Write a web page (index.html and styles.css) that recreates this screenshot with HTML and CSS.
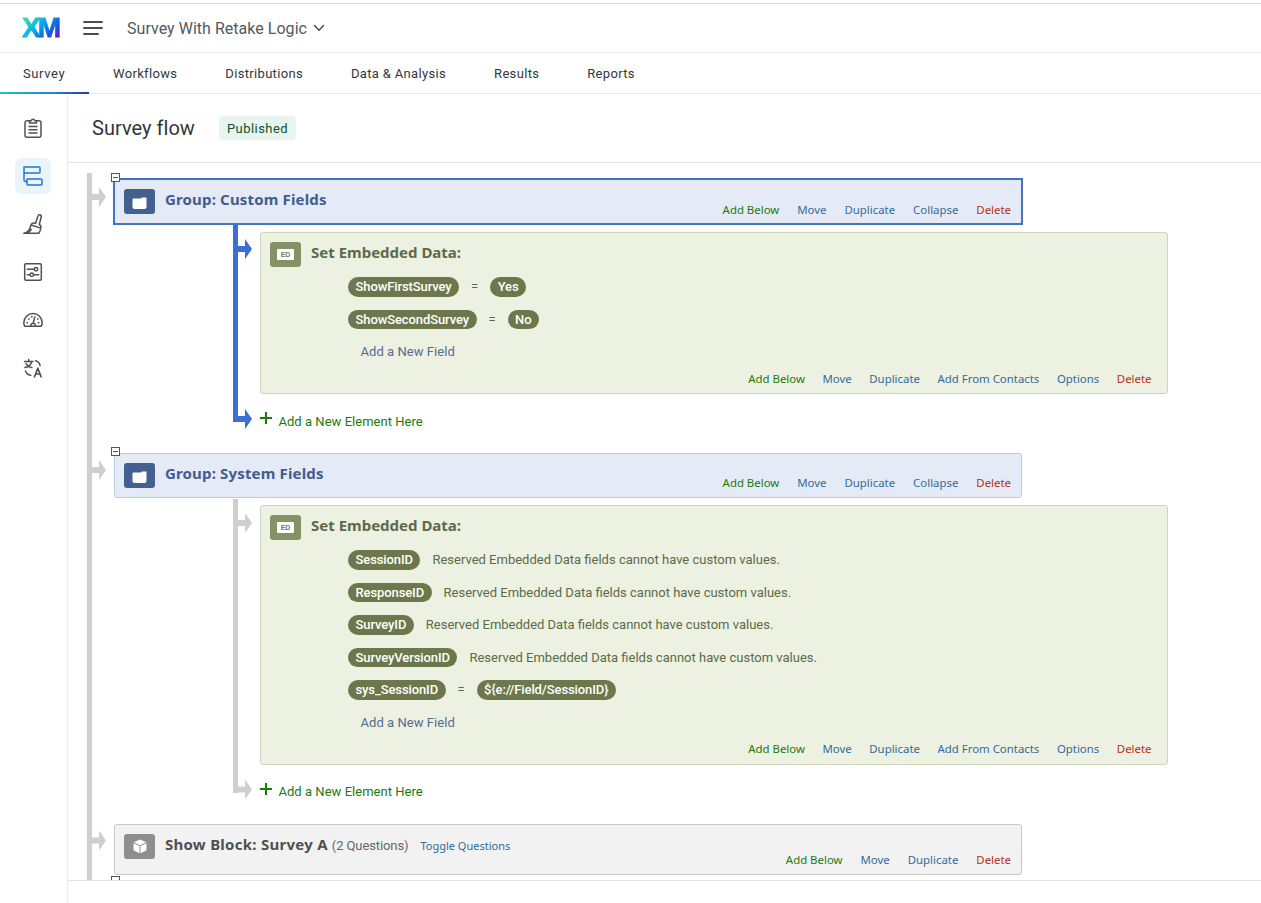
FILE: index.html
```html
<!DOCTYPE html>
<html lang="en">
<head>
<meta charset="UTF-8" />
<meta name="viewport" content="width=device-width, initial-scale=1" />
<title>Survey flow</title>
<link rel="stylesheet" href="styles.css">
</head>
<body>
<header class="topbar">
  <span class="logo">XM</span>
  <svg class="menu" width="20" height="14" viewBox="0 0 20 14" fill="none" stroke="#4a4d50" stroke-width="2" stroke-linecap="round"><path d="M1 1h18M1 7h18M1 13h14"/></svg>
  <span class="project">Survey With Retake Logic</span>
  <svg width="12" height="8" viewBox="0 0 12 8" fill="none" stroke="#4a4d50" stroke-width="1.5" stroke-linecap="round" stroke-linejoin="round"><path d="M1.500 1.500l4.500 4.700 4.500-4.700"/></svg>
</header>

<nav class="tabs">
  <a class="tab active">Survey</a>
  <a class="tab">Workflows</a>
  <a class="tab">Distributions</a>
  <a class="tab">Data &amp; Analysis</a>
  <a class="tab">Results</a>
  <a class="tab">Reports</a>
</nav>

<div class="main">
  <aside class="sidebar">
    <a class="side-item"><svg viewBox="0 0 20 20"><path d="M6.500 2.700H4a2 2 0 0 0-2 2v12.500a2 2 0 0 0 2 2h12a2 2 0 0 0 2-2V4.700a2 2 0 0 0-2-2h-2.500M6.500 5V2.700h1.600a2 2 0 0 1 3.800 0h1.600V5zM6 8.500h8M6 11.800h8M6 15.100h8"/></svg></a>
    <a class="side-item active"><svg viewBox="0 0 20 20"><path d="M1 1h15a1 1 0 0 1 1 1v4a1 1 0 0 1-1 1H1zM1 7v7a1.500 1.500 0 0 0 1.500 1.500H4M4 13h14a1 1 0 0 1 1 1v4a1 1 0 0 1-1 1H5a1 1 0 0 1-1-1z"/></svg></a>
    <a class="side-item"><svg viewBox="0 0 20 20"><path d="M.800 19.200c4-.300 6.200-3.400 7.200-8.200l9.800 3.100c-.3 2-.9 3.600-2 5.100zM8 11c.5-1.500 1.500-2.300 3-2l1.500.4L15 2a1.700 1.700 0 0 1 3.300.8L16.300 10.500c1.700.7 2 1.800 1.500 3.600M5 19l3.300-3.400"/></svg></a>
    <a class="side-item"><svg viewBox="0 0 20 20"><rect x="1.700" y="1.700" width="16.600" height="16.600" rx="1.200"/><path d="M4.300 7.200h6.800M4.300 12.800h2.500M10.800 12.800h5"/><circle cx="13" cy="7.200" r="1.700"/><circle cx="8.800" cy="12.800" r="1.700"/></svg></a>
    <a class="side-item"><svg viewBox="0 0 20 20"><path d="M1.800 16.300C.8 15 .8 13.900.8 12.800a9.200 9.200 0 0 1 18.400 0c0 1.100 0 2.200-1 3.500zM11.800 7l-1.600 6M8 16a2.200 2.200 0 1 1 4.200 0"/><path d="M4 12.800h.6M5.500 9h.6M8.500 6.700h.6M14.500 9h.6M15.300 12.800h.6"/></svg></a>
    <a class="side-item"><svg viewBox="0 0 20 20"><path d="M1.500 3.500h8.500M5.700 1.500v2M3 5.500c1 2.200 3 3.500 5.800 4M8.500 4C8 6.800 5.500 8.800 2 9.600M12.500 2.700c2.800.700 4.200 2.500 4.600 5M2.500 13c.8 2.400 2.400 3.800 5.200 4.300"/><path stroke-width="1.700" d="M11.500 18.800l3.300-8.600 3.300 8.600M12.700 16h4.300"/></svg></a>
  </aside>

  <main class="content">
    <div class="page-head">
      <h1>Survey flow</h1>
      <span class="badge">Published</span>
    </div>

    <div class="viewport">
      <div class="flow">

        <section class="node selected">
          <span class="toggle"></span>
          <div class="card group">
            <span class="icon"><svg width="15" height="12" viewBox="0 0 15 12"><path d="M.500 2.500a1 1 0 0 1 1-1H9L10 .500h4.500V10a2 2 0 0 1-2 2h-10a2 2 0 0 1-2-2z" fill="#fff"/></svg></span>
            <h2>Group: Custom Fields</h2>
            <div class="actions">
              <a class="add">Add Below</a><a>Move</a><a>Duplicate</a><a>Collapse</a><a class="delete">Delete</a>
            </div>
          </div>
          <div class="branch">
            <div class="node">
              <div class="card data">
                <div class="data-head"><span class="icon"><b>ED</b></span><h2>Set Embedded Data:</h2></div>
                <div class="fields">
                  <div class="field"><span class="pill">ShowFirstSurvey</span><span class="eq">=</span><span class="pill">Yes</span></div>
                  <div class="field"><span class="pill">ShowSecondSurvey</span><span class="eq">=</span><span class="pill">No</span></div>
                  <a class="new-field">Add a New Field</a>
                </div>
                <div class="actions">
                  <a class="add">Add Below</a><a>Move</a><a>Duplicate</a><a>Add From Contacts</a><a>Options</a><a class="delete">Delete</a>
                </div>
              </div>
            </div>
            <a class="new-element"><i class="plus"></i>Add a New Element Here</a>
          </div>
        </section>

        <section class="node">
          <span class="toggle"></span>
          <div class="card group">
            <span class="icon"><svg width="15" height="12" viewBox="0 0 15 12"><path d="M.500 2.500a1 1 0 0 1 1-1H9L10 .500h4.500V10a2 2 0 0 1-2 2h-10a2 2 0 0 1-2-2z" fill="#fff"/></svg></span>
            <h2>Group: System Fields</h2>
            <div class="actions">
              <a class="add">Add Below</a><a>Move</a><a>Duplicate</a><a>Collapse</a><a class="delete">Delete</a>
            </div>
          </div>
          <div class="branch">
            <div class="node">
              <div class="card data">
                <div class="data-head"><span class="icon"><b>ED</b></span><h2>Set Embedded Data:</h2></div>
                <div class="fields">
                  <div class="field"><span class="pill">SessionID</span><span class="note">Reserved Embedded Data fields cannot have custom values.</span></div>
                  <div class="field"><span class="pill">ResponseID</span><span class="note">Reserved Embedded Data fields cannot have custom values.</span></div>
                  <div class="field"><span class="pill">SurveyID</span><span class="note">Reserved Embedded Data fields cannot have custom values.</span></div>
                  <div class="field"><span class="pill">SurveyVersionID</span><span class="note">Reserved Embedded Data fields cannot have custom values.</span></div>
                  <div class="field"><span class="pill">sys_SessionID</span><span class="eq">=</span><span class="pill">${e://Field/SessionID}</span></div>
                  <a class="new-field">Add a New Field</a>
                </div>
                <div class="actions">
                  <a class="add">Add Below</a><a>Move</a><a>Duplicate</a><a>Add From Contacts</a><a>Options</a><a class="delete">Delete</a>
                </div>
              </div>
            </div>
            <a class="new-element"><i class="plus"></i>Add a New Element Here</a>
          </div>
        </section>

        <section class="node">
          <div class="card block">
            <span class="icon"><svg width="14" height="15" viewBox="0 0 14 15" fill="#fff"><path d="M7 .500l6.200 2.800L7 6.200.800 3.300zM.500 4.300l6 2.800v7.200l-6-3zM13.500 4.300l-6 2.800v7.200l6-3z"/></svg></span>
            <h2>Show Block: Survey A</h2>
            <span class="count">(2 Questions)</span>
            <a class="toggle-questions">Toggle Questions</a>
            <div class="actions">
              <a class="add">Add Below</a><a>Move</a><a>Duplicate</a><a class="delete">Delete</a>
            </div>
          </div>
        </section>

        <section class="node next">
          <span class="toggle"></span>
        </section>

      </div>
    </div>
  </main>
</div>
</body>
</html>
```
FILE: styles.css
```css
* {
  box-sizing: border-box;
}
body {
  margin: 0;
  height: 903px;
  overflow: hidden;
  display: flex;
  flex-direction: column;
  font-family: Roboto, "Noto Sans", sans-serif;
  font-size: 13px;
  color: #32363a;
  background: #fff;
}
h1, h2 {
  margin: 0;
}

/* header */
.topbar {
  height: 50px;
  margin-top: 3px;
  padding-left: 22px;
  border-top: 1px solid #dcdcdc;
  border-bottom: 1px solid #ebebeb;
  display: flex;
  align-items: center;
}
.logo {
  width: 38px;
  font: bold 28px/30px "Liberation Sans", sans-serif;
  letter-spacing: -3px;
  background: linear-gradient(135deg, #2fe0a0 15%, #0db8e8 38%, #0a6be0 65%, #5b1fd0 88%);
  -webkit-background-clip: text;
  background-clip: text;
  -webkit-text-stroke: 0.8px transparent;
  color: transparent;
}
.menu {
  margin: 0 24px 0 23px;
}
.project {
  font-size: 16px;
  letter-spacing: 0.03px;
  color: #55585c;
  margin-right: 6px;
}
.tabs {
  height: 41px;
  border-bottom: 1px solid #e8e8e8;
  display: flex;
}
.tab {
  padding: 0 24px;
  line-height: 41px;
  letter-spacing: 0.33px;
  height: 41px;
}
.tab.active {
  width: 89px;
  padding: 0 0 0 23px;
  letter-spacing: 0.6px;
  background: linear-gradient(90deg, #21c5c5, #1a86d8 60%, #2d32aa) bottom / 100% 2px no-repeat;
}

/* left icons */
.main {
  flex: 1;
  display: flex;
  min-height: 0;
}
.sidebar {
  width: 68px;
  padding: 16px 0 0 15px;
  border-right: 1px solid #ebebeb;
  display: flex;
  flex-direction: column;
  gap: 12px;
}
.side-item {
  width: 36px;
  height: 36px;
  border-radius: 6px;
  display: flex;
  align-items: center;
  justify-content: center;
}
.side-item svg {
  width: 20px;
  height: 20px;
  fill: none;
  stroke: #4f5254;
  stroke-width: 1.5;
  stroke-linecap: round;
  stroke-linejoin: round;
}
.side-item.active {
  background: #ebf3fb;
}
.side-item.active svg {
  stroke: #1f78d1;
}

.content {
  flex: 1;
}
.page-head {
  height: 69px;
  padding-left: 24px;
  border-bottom: 1px solid #e2e2e2;
  display: flex;
  align-items: center;
  gap: 24px;
}
.page-head h1 {
  font-size: 20px;
  font-weight: normal;
  letter-spacing: 0.03px;
}
.badge {
  height: 24px;
  padding: 0 8px;
  border-radius: 4px;
  background: #e8f5ef;
  color: #0f5132;
  line-height: 25px;
  letter-spacing: 0.45px;
}

/* flow */
.viewport {
  height: 718px;
  overflow: hidden;
  border-bottom: 1px solid #e2e2e2;
}
.flow {
  margin: 10px 0 0 19px;
  padding: 6px 0 60px 22px;
  border-left: 5px solid #cfcfcf;
}
.node {
  position: relative;
  width: 908px;
}
.node::before,
.new-element::before {
  content: "";
  position: absolute;
  left: -22px;
  top: 7px;
  width: 14px;
  height: 20px;
  background: #cfcfcf;
  clip-path: polygon(0 7px, 7px 7px, 7px 0, 14px 10px, 7px 20px, 7px 13px, 0 13px);
}
.node.selected::before,
.branch .node::before {
  top: 8px;
}
.node.next {
  height: 40px;
  margin-top: 7px;
}
.toggle {
  position: absolute;
  z-index: 1;
  left: -3px;
  top: -6px;
  width: 9px;
  height: 9px;
  border: 1px solid #55574a;
  background: linear-gradient(#55574a, #55574a) center / 5px 1px no-repeat #fff;
}
.card {
  border: 1px solid;
  border-radius: 3px;
}
.card h2 {
  font: bold 15px/20px "Noto Sans", sans-serif;
}
.group,
.block {
  height: 45px;
  padding: 0 10px 0 9px;
  display: flex;
}
.group {
  background: #e5ebf6;
  border-color: #b9cadd;
  color: #435c90;
}
.block {
  height: 51px;
  background: #f2f2f2;
  border-color: #c8c8c8;
  color: #505050;
}
.group h2,
.block h2 {
  margin: 9px 0 0 10px;
  letter-spacing: 0.16px;
}
.block h2 {
  letter-spacing: 0.26px;
}
.icon {
  width: 31px;
  height: 25px;
  border-radius: 3px;
  display: flex;
  align-items: center;
  justify-content: center;
}
.group .icon,
.block .icon {
  margin-top: 9px;
}
.group .icon {
  background: #43608f;
  padding-top: 3px;
}
.block .icon {
  background: #8e8e8e;
}
.selected > .card {
  margin-bottom: 1px;
  border-color: #4472c4;
  border-radius: 0;
  box-shadow: 0 0 0 1px #4472c4;
}
.actions {
  margin: auto 0 0 auto;
  display: flex;
  gap: 18px;
  padding-bottom: 7px;
  font: 11.4px/15px "Noto Sans", sans-serif;
  color: #346a9c;
}
.selected > .card .actions {
  padding-bottom: 6px;
}
.actions .add {
  color: #1a7a0c;
}
.actions .delete {
  color: #b5300f;
}

.branch {
  position: relative;
  margin-left: 119px;
  padding: 7px 0 0 27px;
}
.branch::before {
  content: "";
  position: absolute;
  left: 0;
  top: 1px;
  bottom: 31px;
  width: 5px;
  background: #cfcfcf;
}
.selected > .branch::before {
  top: 0;
}
.selected > .branch .node::before {
  top: 7px;
}
.selected > .branch::before,
.selected > .branch .node::before,
.selected > .branch .new-element::before {
  background: #3c6fd6;
}
.data {
  padding: 9px 15.5px 0 9px;
  background: #edf1e1;
  border-color: #cdd4b8;
  color: #5b6b49;
  display: flex;
  flex-direction: column;
}
.data-head {
  display: flex;
  gap: 10px;
  height: 35px;
}
.data .icon {
  background: #839365;
}
.data .icon b {
  width: 17px;
  height: 11px;
  background: #fff;
  border-radius: 1px;
  color: #6f7d55;
  font: bold 7px/11px "Liberation Sans", sans-serif;
  text-align: center;
}
.fields {
  padding-left: 78px;
}
.field {
  height: 32.5px;
  display: flex;
}
.pill {
  height: 19.5px;
  padding: 0 7.5px;
  border-radius: 10px;
  background: #6c784b;
  color: #fff;
  font-weight: 500;
  line-height: 19px;
  letter-spacing: -0.1px;
}
.eq {
  width: 31px;
  text-align: center;
  line-height: 19px;
}
.note {
  margin-left: 12px;
  line-height: 19px;
}
.new-field {
  display: block;
  padding-left: 12.5px;
  line-height: 19px;
  letter-spacing: 0.05px;
  color: #566b91;
}
.data .actions {
  margin-top: 9.5px;
  padding-bottom: 7.5px;
  gap: 17.6px;
}
.new-element {
  position: relative;
  display: flex;
  align-items: center;
  gap: 6.5px;
  height: 59px;
  padding-bottom: 4.500px;
  color: #1a7a0c;
  letter-spacing: 0.03px;
}
.new-element::before {
  top: 15px;
}
.plus {
  width: 12px;
  height: 12px;
  margin-top: -6px;
  background: linear-gradient(#1a7a0c, #1a7a0c) center / 12px 2px no-repeat,
    linear-gradient(#1a7a0c, #1a7a0c) center / 2px 12px no-repeat;
}
.count {
  margin: 11px 0 0 4px;
  line-height: 19px;
  letter-spacing: -0.1px;
  color: #666;
}
.toggle-questions {
  margin: 13px 0 0 12px;
  font: 11px/16px "Noto Sans", sans-serif;
  color: #346a9c;
}
```
